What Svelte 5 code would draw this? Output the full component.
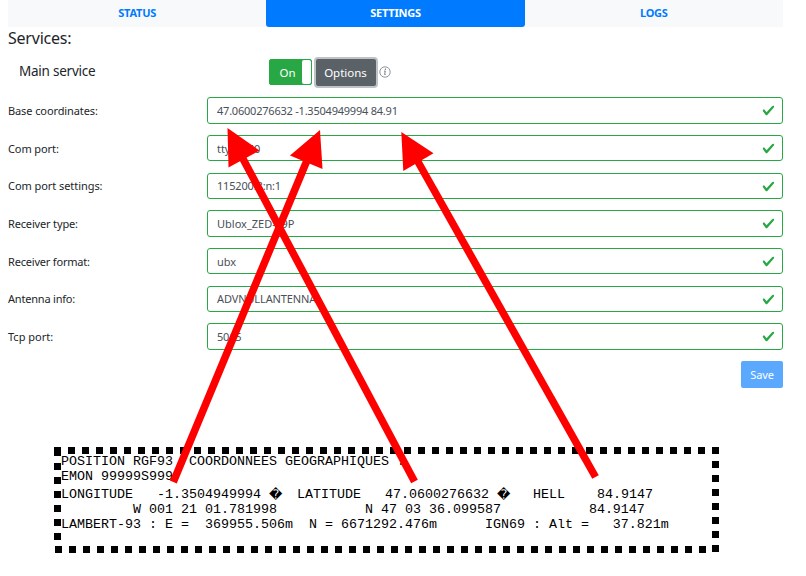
<script>
  const tabs = ['STATUS', 'SETTINGS', 'LOGS'];
  const fields = [
    { label: 'Base coordinates:', value: '47.0600276632 -1.3504949994 84.91', h: 27, gap: 11, line: 28, ls: -0.1, vs: -0.22 },
    { label: 'Com port:', value: 'ttyACM0', h: 26, gap: 12, line: 28, ls: -0.1, vs: -0.05 },
    { label: 'Com port settings:', value: '115200:8:n:1', h: 26, gap: 11, line: 26, ls: -0.06, vs: -0.17 },
    { label: 'Receiver type:', value: 'Ublox_ZED-F9P', h: 27, gap: 11, line: 28, ls: -0.16, vs: 0 },
    { label: 'Receiver format:', value: 'ubx', h: 26, gap: 12, line: 28, ls: -0.19, vs: 0 },
    { label: 'Antenna info:', value: 'ADVNULLANTENNA', h: 26, gap: 11, line: 26, ls: -0.2, vs: -0.12 },
    { label: 'Tcp port:', value: '5015', h: 27, gap: 11, line: 28, ls: 0, vs: -0.2 }
  ];
  const arrows = [
    { shaft: [414.5, 481.5, 242, 157], head: '227.5,128 228.5,167.5 259.5,150.5' },
    { shaft: [173.3, 482, 308, 158], head: '320,130 290,155.5 322.5,169' },
    { shaft: [595.5, 477, 417, 160], head: '401.3,132 403.3,171 433.5,153.3' }
  ];
</script>

<main>
  <nav>
    {#each tabs as tab}
      <span class="tab" class:active={tab === 'SETTINGS'}>{tab}</span>
    {/each}
  </nav>
  <h1>Services:</h1>
  <section class="service">
    <span class="name">Main service</span>
    <div class="toggle"><span>On</span><i></i></div>
    <div class="options">Options</div>
    <svg class="info" width="12" height="12" viewBox="0 0 12 12">
      <circle cx="6" cy="6" r="5.2" fill="none" stroke="#83898e" stroke-width=".9" />
      <path d="M5 5.1h1.3L5.6 8.5h1.1" fill="none" stroke="#6c757d" stroke-width=".9" />
      <circle cx="6.4" cy="3.2" r=".7" fill="#6c757d" />
    </svg>
  </section>
  <form>
    {#each fields as f}
      <div class="row" style="height:{f.h}px;margin-bottom:{f.gap}px;line-height:{f.line}px">
        <span class="label" style="letter-spacing:{f.ls}px">{f.label}</span>
        <div class="input">
          <span style="letter-spacing:{f.vs}px">{f.value}</span>
          <svg width="13" height="13" viewBox="0 0 8 8">
            <path fill="#28a745" d="M2.3 6.73L.6 4.53c-.4-1.04.46-1.4 1.1-.8l1.1 1.4 3.4-3.8c.6-.63 1.6-.27 1.2.7l-4 4.6c-.43.5-.8.4-1.1.1z" />
          </svg>
        </div>
      </div>
    {/each}
    <div class="save">Save</div>
  </form>
  <section class="report">
    <pre>POSITION RGF93  COORDONNEES GEOGRAPHIQUES :</pre>
    <pre>EMON 99999S999</pre>
    <pre class="third">LONGITUDE   -1.3504949994 <b>�</b>  LATITUDE   47.0600276632 <b>�</b>   HELL    84.9147</pre>
    <pre>         W 001 21 01.781998           N 47 03 36.099587           84.9147</pre>
    <pre>LAMBERT-93 : E =  369955.506m  N = 6671292.476m      IGN69 : Alt =   37.821m</pre>
  </section>
  <svg class="overlay" width="806" height="576" viewBox="0 0 806 576">
    <g stroke="#000" stroke-width="7" stroke-dasharray="7 7" shape-rendering="crispEdges">
      <path d="M54 450.5H719" />
      <path d="M55 549.5H712" />
      <path d="M57.5 449v7M57.5 463V540" />
      <path d="M715.5 447V552" />
    </g>
    {#each arrows as a}
      <line x1={a.shaft[0]} y1={a.shaft[1]} x2={a.shaft[2]} y2={a.shaft[3]} stroke="#f00" stroke-width="7.5" />
      <polygon points={a.head} fill="#f00" />
    {/each}
  </svg>
</main>

<style>
  :global(body) { margin: 0; background: #fff; }
  main {
    position: relative; box-sizing: border-box; width: 806px; height: 576px; padding: 0 23px 0 8px;
    overflow: hidden; font-family: "Noto Sans", sans-serif; font-size: 11px; color: #212529;
    display: flex; flex-direction: column;
  }
  nav { display: flex; height: 27px; background: #f8f9fa; }
  .tab {
    flex: 1; text-align: center; line-height: 26px; font-weight: 700; font-size: 11px;
    letter-spacing: -0.22px; color: #007bff; border-radius: 0 0 3px 3px;
  }
  .active { background: #007bff; color: #fff; }
  h1 { margin: 0; font-size: 16px; font-weight: 400; line-height: 22px; height: 29px; letter-spacing: -0.22px; }
  .service { display: flex; height: 32px; align-items: center; }
  .name { width: 250px; margin-left: 11px; font-size: 13.5px; line-height: 20px; margin-top: -3px; letter-spacing: -0.24px; }
  .toggle {
    box-sizing: border-box; width: 43px; height: 26px; border: 1px solid #28a745; border-radius: 2px;
    background: #28a745; display: flex; color: #fff; margin-right: 2px;
  }
  .toggle span { width: 32px; padding-left: 3px; text-align: center; line-height: 26px; font-size: 11.5px; box-sizing: border-box; }
  .toggle i { flex: 1; background: #fff; border-radius: 2px; }
  .options {
    box-sizing: border-box; width: 64px; height: 31px; border: 2px solid #bfc3c7; border-radius: 4px;
    background: #5a6268; color: #fff; font-size: 11.5px; line-height: 28px; text-align: center;
    padding-right: 1px;
  }
  .info { margin-left: 1px; }
  form { display: flex; flex-direction: column; margin-top: 9px; }
  .row { display: flex; }
  .label { width: 199px; }
  .input {
    flex: 1; box-sizing: border-box; border: 1px solid #28a745; border-radius: 3px; color: #495057;
    display: flex; align-items: flex-start; justify-content: space-between; padding: 0 7px 0 9px;
  }
  .input span { margin-top: -1px; white-space: pre; }
  .input svg { margin-top: 6px; }
  .save {
    align-self: flex-end; width: 42px; height: 27px; line-height: 28px; text-align: center;
    border-radius: 2px; background: #5aa9ff; color: #fff; letter-spacing: -0.1px;
  }
  .report { margin: 66px 0 0 53px; color: #000; }
  pre { margin: 0; font: 13.333px/15px "Liberation Mono", "Courier New", monospace; }
  .third { margin-top: 3px; }
  b { display: inline-block; width: 12px; height: 15px; font: 13px/15px "DejaVu Sans", sans-serif; vertical-align: top; }
  .overlay { position: absolute; left: 0; top: 0; }
</style>
